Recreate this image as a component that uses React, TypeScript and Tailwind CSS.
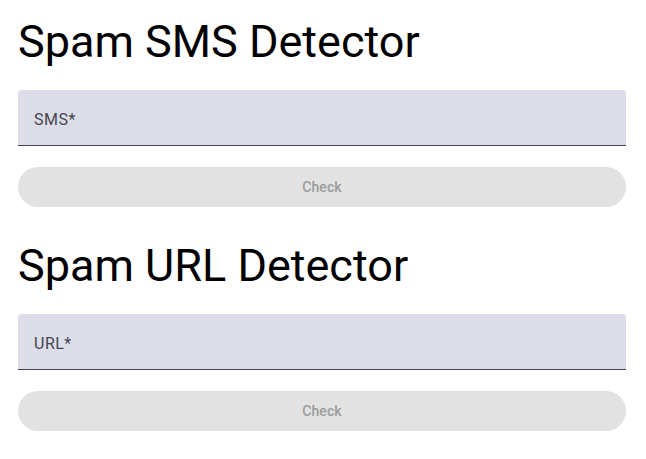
import React from "react";

function DetectorSection({ title, label }: { title: string; label: string }) {
  return (
    <section className="flex flex-col">
      <h1 className="h-[52px] text-[45px] leading-[52px] font-normal text-black">{title}</h1>
      <div className="mt-[22px] h-[56px] flex items-center rounded-t-[4px] border-b border-[#44464f] bg-[#dcdde9] px-4 pt-[5px]">
        <span className="text-[16px] tracking-[0.5px] text-[#44464f]">{label}</span>
      </div>
      <button
        disabled
        className="mt-[21px] h-10 w-full rounded-full bg-[#e2e2e2] text-[14px] font-medium tracking-[0.1px] text-[#9b9b9b]"
      >
        Check
      </button>
    </section>
  );
}

export default function App() {
  return (
    <div
      className="min-h-screen w-[646px] bg-white pt-4 px-[18px] pr-[20px] flex flex-col gap-[33px]"
      style={{ fontFamily: "Roboto, 'Liberation Sans', sans-serif" }}
    >
      <DetectorSection title="Spam SMS Detector" label="SMS*" />
      <DetectorSection title="Spam URL Detector" label="URL*" />
    </div>
  );
}
